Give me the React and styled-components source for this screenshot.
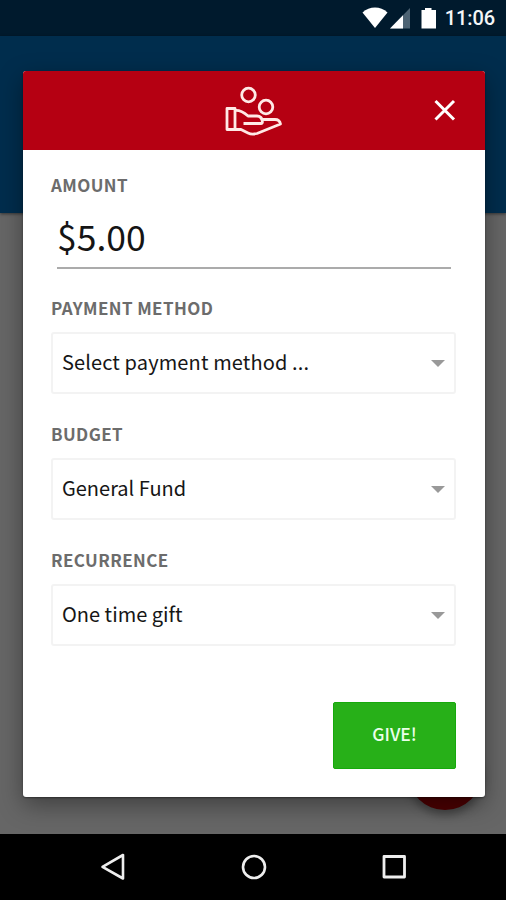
import React from 'react';
import styled, { createGlobalStyle } from 'styled-components';

const GlobalStyle = createGlobalStyle`
  * {
    box-sizing: border-box;
  }

  body {
    margin: 0;
    background: #000;
    font-family: 'Noto Sans CJK SC', 'Noto Sans', sans-serif;
  }
`;

const Screen = styled.div`
  position: relative;
  display: flex;
  flex-direction: column;
  width: 506px;
  height: 900px;
  overflow: hidden;
`;

const StatusBar = styled.div`
  display: flex;
  align-items: center;
  justify-content: flex-end;
  height: 36px;
  padding-right: 11px;
  background: #001a2d;
`;

const Clock = styled.span`
  margin-left: 7px;
  color: #f4f6f7;
  font-family: Roboto, sans-serif;
  font-size: 20px;
  font-weight: 500;
  line-height: 36px;
  letter-spacing: -0.1px;
`;

const Page = styled.div`
  flex: 1;
  background: #666;
`;

const Banner = styled.div`
  height: 177px;
  background: #002d4d;
  box-shadow: 0 1px 3px rgba(0, 0, 0, 0.5);
`;

const NavBar = styled.div`
  position: relative;
  display: flex;
  align-items: center;
  justify-content: space-between;
  height: 66px;
  padding: 0 98px 0 99px;
  background: #000;
`;

const Fab = styled.div`
  position: absolute;
  top: 736px;
  left: 408px;
  width: 74px;
  height: 74px;
  border-radius: 50%;
  background: #4c0002;
  box-shadow: 0 5px 10px rgba(0, 0, 0, 0.35);
`;

const Dialog = styled.div`
  position: absolute;
  top: 71px;
  left: 23px;
  display: flex;
  flex-direction: column;
  width: 462px;
  height: 726px;
  border-radius: 3px;
  overflow: hidden;
  background: #fff;
  box-shadow: 0 1px 2px rgba(0, 0, 0, 0.4), 0 8px 24px rgba(0, 0, 0, 0.38);
`;

const Header = styled.div`
  display: grid;
  grid-template-columns: 1fr 60px 1fr;
  align-items: center;
  height: 79px;
  padding: 0 29px 2px 27px;
  background: #b50012;
`;

const CloseButton = styled.button`
  display: flex;
  justify-self: end;
  padding: 0;
  border: 0;
  background: none;
`;

const Form = styled.div`
  display: flex;
  flex: 1;
  flex-direction: column;
  padding: 23px 29px 28px 28px;
`;

const Label = styled.label`
  height: 24px;
  color: #6c6c6c;
  font-size: 17px;
  font-weight: 700;
  line-height: 24px;
  letter-spacing: 0.4px;
  white-space: nowrap;
`;

const Amount = styled.div`
  height: 59px;
  margin: 13px 5px 27px 6px;
  border-bottom: 2px solid #ababab;
  color: #151515;
  font-size: 35.5px;
  line-height: 52px;
`;

const Select = styled.div`
  display: flex;
  align-items: center;
  justify-content: space-between;
  height: 62px;
  margin: 12px 0 28px;
  padding: 0 9px 2px;
  border: 2px solid #f3f3f3;
  border-radius: 3px;
`;

const Value = styled.span`
  color: #161616;
  font-size: 20px;
  line-height: 28px;
  letter-spacing: ${props => props.$spacing || '0'};
  white-space: nowrap;
`;

const Caret = styled.span`
  margin-top: 2px;
  border: 7px solid transparent;
  border-top-color: #999;
  border-bottom: 0;
`;

const GiveButton = styled.button`
  align-self: flex-end;
  width: 123px;
  height: 67px;
  margin-top: auto;
  padding: 0 0 4px;
  border: 1px solid #16a90c;
  border-radius: 2px;
  background: #27b018;
  color: #eaffea;
  font-family: inherit;
  font-size: 17.5px;
  font-weight: 500;
`;

const SelectField = ({ label, value, spacing }) => (
  <>
    <Label>{label}</Label>
    <Select>
      <Value $spacing={spacing}>{value}</Value>
      <Caret />
    </Select>
  </>
);

const StatusIcons = () => (
  <svg width="76" height="24" viewBox="0 0 76 24">
    {/* wifi */}
    <path d="M.5 6.500C7.500-.2 18.500-.2 25.500 6.500L13 22z" fill="#fff" />
    {/* signal */}
    <path d="M48 2v20.500H28z" fill="#4d6373" />
    <path d="M41 9.200v13.300H28z" fill="#fff" />
    {/* battery */}
    <path d="M63 2h6.500v2H74v18.500H59.500V4H63z" fill="#fff" />
  </svg>
);

const GiveIcon = () => (
  <svg width="60" height="52" viewBox="0 0 60 52" fill="none" stroke="#ffe9e6" strokeWidth="2.800" strokeLinejoin="round">
    <circle cx="25.500" cy="11" r="6.800" />
    <circle cx="43" cy="23" r="6.800" />
    <path d="M4 24.500h8v21H4z" />
    <path d="M12 26.500c5-.5 9 2 13 5.500h9c3 0 5 2 5.500 6M20.500 39.500H38c2 0 2-4 0-6M39 35.500h13c3 0 5 2 5.500 4.500L34 49.500c-4 1-6 1-9-.5l-7-3.500h-6" />
  </svg>
);

export default function App() {
  return (
    <>
      <GlobalStyle />
      <Screen>
        <StatusBar>
          <StatusIcons />
          <Clock>11:06</Clock>
        </StatusBar>

        <Page>
          <Banner />
        </Page>
        <Fab />

        <NavBar>
          <svg width="28" height="28" viewBox="0 0 28 28" fill="none" stroke="#eee" strokeWidth="2.600" strokeLinejoin="round">
            <path d="M24 2v23.500L3.500 13.800z" />
          </svg>
          <svg width="28" height="28" viewBox="0 0 28 28" fill="none" stroke="#eee" strokeWidth="2.600">
            <circle cx="14" cy="14" r="11" />
          </svg>
          <svg width="28" height="28" viewBox="0 0 28 28" fill="none" stroke="#eee" strokeWidth="2.800" strokeLinejoin="round">
            <rect x="4" y="3.500" width="20.500" height="20.500" />
          </svg>
        </NavBar>

        <Dialog>
          <Header>
            <span />
            <GiveIcon />
            <CloseButton aria-label="Close">
              <svg width="22" height="22" viewBox="0 0 22 22" stroke="#fff" strokeWidth="3">
                <path d="M1.500 2l18.500 18.500M20 2L1.500 20.500" />
              </svg>
            </CloseButton>
          </Header>

          <Form>
            <Label>AMOUNT</Label>
            <Amount>$5.00</Amount>
            <SelectField label="PAYMENT METHOD" value="Select payment method ..." spacing="0.12px" />
            <SelectField label="BUDGET" value="General Fund" />
            <SelectField label="RECURRENCE" value="One time gift" />
            <GiveButton>GIVE!</GiveButton>
          </Form>
        </Dialog>
      </Screen>
    </>
  );
}
